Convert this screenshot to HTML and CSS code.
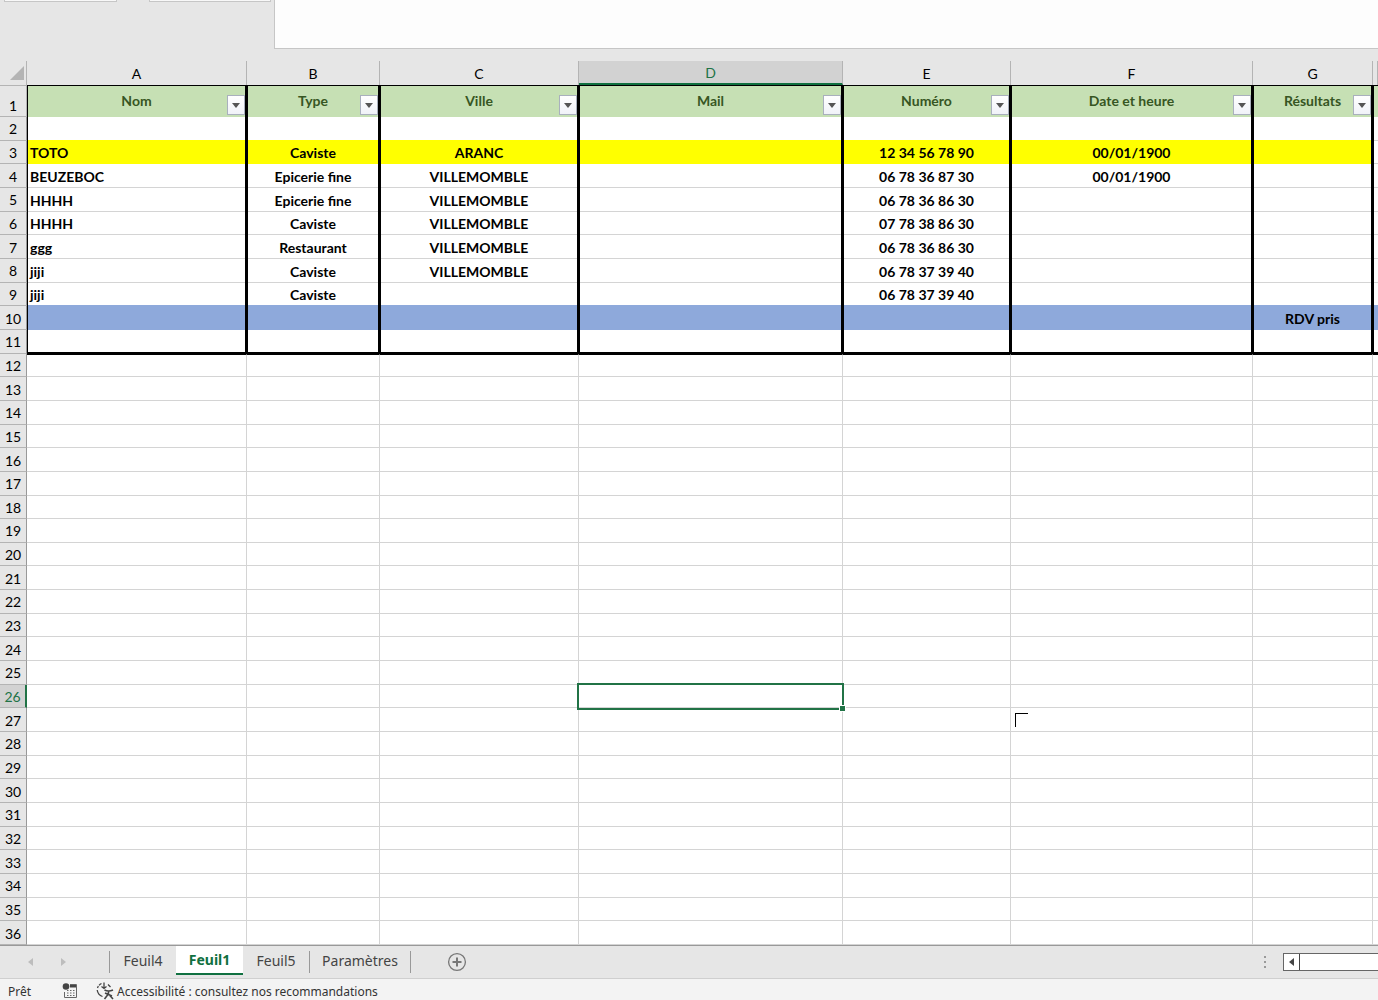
FILE: index.html
```html
<!DOCTYPE html>
<html lang="fr">
<head>
<meta charset="utf-8">
<title>Classeur</title>
<link rel="stylesheet" href="styles.css">
</head>
<body>
<div class="app">
  <header class="formula-bar">
    <input class="name-box" aria-label="Zone Nom">
    <div class="formula-tools"></div>
    <textarea class="formula-input" aria-label="Barre de formule"></textarea>
  </header>

  <main class="sheet">
    <table class="grid">
      <colgroup><col class="c-row"><col class="c-a"><col class="c-b"><col class="c-c"><col class="c-d"><col class="c-e"><col class="c-f"><col class="c-g"><col></colgroup>
      <thead>
        <tr class="letters"><th class="corner"><svg width="14" height="14" viewBox="0 0 14 14"><path d="M14 0V14H0Z" fill="#b4b4b4"/></svg></th><th>A</th><th>B</th><th>C</th><th class="current">D</th><th>E</th><th>F</th><th>G</th><th></th></tr>
        <tr class="titles"><th class="num">1</th>
          <th>Nom<button class="filter" aria-label="Filtrer Nom"></button></th>
          <th>Type<button class="filter" aria-label="Filtrer Type"></button></th>
          <th>Ville<button class="filter" aria-label="Filtrer Ville"></button></th>
          <th>Mail<button class="filter" aria-label="Filtrer Mail"></button></th>
          <th>Numéro<button class="filter" aria-label="Filtrer Numéro"></button></th>
          <th>Date et heure<button class="filter" aria-label="Filtrer Date et heure"></button></th>
          <th>Résultats<button class="filter" aria-label="Filtrer Résultats"></button></th>
          <th></th></tr>
      </thead>
      <tbody class="data">
        <tr class="before-yellow"><th>2</th><td></td><td></td><td></td><td></td><td></td><td></td><td></td><td></td></tr>
        <tr class="yellow"><th>3</th><td>TOTO</td><td>Caviste</td><td>ARANC</td><td></td><td>12 34 56 78 90</td><td>00/01/1900</td><td></td><td></td></tr>
        <tr><th>4</th><td>BEUZEBOC</td><td>Epicerie fine</td><td>VILLEMOMBLE</td><td></td><td>06 78 36 87 30</td><td>00/01/1900</td><td></td><td></td></tr>
        <tr><th>5</th><td>HHHH</td><td>Epicerie fine</td><td>VILLEMOMBLE</td><td></td><td>06 78 36 86 30</td><td></td><td></td><td></td></tr>
        <tr><th>6</th><td>HHHH</td><td>Caviste</td><td>VILLEMOMBLE</td><td></td><td>07 78 38 86 30</td><td></td><td></td><td></td></tr>
        <tr><th>7</th><td>ggg</td><td>Restaurant</td><td>VILLEMOMBLE</td><td></td><td>06 78 36 86 30</td><td></td><td></td><td></td></tr>
        <tr><th>8</th><td>jiji</td><td>Caviste</td><td>VILLEMOMBLE</td><td></td><td>06 78 37 39 40</td><td></td><td></td><td></td></tr>
        <tr class="before-blue"><th>9</th><td>jiji</td><td>Caviste</td><td></td><td></td><td>06 78 37 39 40</td><td></td><td></td><td></td></tr>
        <tr class="blue"><th>10</th><td></td><td></td><td></td><td></td><td></td><td></td><td>RDV pris</td><td></td></tr>
        <tr class="last"><th>11</th><td></td><td></td><td></td><td></td><td></td><td></td><td></td><td></td></tr>
      </tbody>
      <tbody class="empty">
        <tr><th>12</th><td></td><td></td><td></td><td></td><td></td><td></td><td></td><td></td></tr>
        <tr><th>13</th><td></td><td></td><td></td><td></td><td></td><td></td><td></td><td></td></tr>
        <tr><th>14</th><td></td><td></td><td></td><td></td><td></td><td></td><td></td><td></td></tr>
        <tr><th>15</th><td></td><td></td><td></td><td></td><td></td><td></td><td></td><td></td></tr>
        <tr><th>16</th><td></td><td></td><td></td><td></td><td></td><td></td><td></td><td></td></tr>
        <tr><th>17</th><td></td><td></td><td></td><td></td><td></td><td></td><td></td><td></td></tr>
        <tr><th>18</th><td></td><td></td><td></td><td></td><td></td><td></td><td></td><td></td></tr>
        <tr><th>19</th><td></td><td></td><td></td><td></td><td></td><td></td><td></td><td></td></tr>
        <tr><th>20</th><td></td><td></td><td></td><td></td><td></td><td></td><td></td><td></td></tr>
        <tr><th>21</th><td></td><td></td><td></td><td></td><td></td><td></td><td></td><td></td></tr>
        <tr><th>22</th><td></td><td></td><td></td><td></td><td></td><td></td><td></td><td></td></tr>
        <tr><th>23</th><td></td><td></td><td></td><td></td><td></td><td></td><td></td><td></td></tr>
        <tr><th>24</th><td></td><td></td><td></td><td></td><td></td><td></td><td></td><td></td></tr>
        <tr><th>25</th><td></td><td></td><td></td><td></td><td></td><td></td><td></td><td></td></tr>
        <tr><th class="current">26</th><td></td><td></td><td></td><td class="selected"><span class="handle"></span></td><td></td><td></td><td></td><td></td></tr>
        <tr><th>27</th><td></td><td></td><td></td><td></td><td></td><td class="pointer-cell"><span class="pointer"></span></td><td></td><td></td></tr>
        <tr><th>28</th><td></td><td></td><td></td><td></td><td></td><td></td><td></td><td></td></tr>
        <tr><th>29</th><td></td><td></td><td></td><td></td><td></td><td></td><td></td><td></td></tr>
        <tr><th>30</th><td></td><td></td><td></td><td></td><td></td><td></td><td></td><td></td></tr>
        <tr><th>31</th><td></td><td></td><td></td><td></td><td></td><td></td><td></td><td></td></tr>
        <tr><th>32</th><td></td><td></td><td></td><td></td><td></td><td></td><td></td><td></td></tr>
        <tr><th>33</th><td></td><td></td><td></td><td></td><td></td><td></td><td></td><td></td></tr>
        <tr><th>34</th><td></td><td></td><td></td><td></td><td></td><td></td><td></td><td></td></tr>
        <tr><th>35</th><td></td><td></td><td></td><td></td><td></td><td></td><td></td><td></td></tr>
        <tr><th>36</th><td></td><td></td><td></td><td></td><td></td><td></td><td></td><td></td></tr>
      </tbody>
    </table>
  </main>

  <nav class="tab-bar" aria-label="Feuilles">
    <div class="arrows">
      <button aria-label="Feuille précédente"><svg width="6" height="8" viewBox="0 0 6 8"><path d="M5 0V8L0 4Z" fill="#bdbdbd"/></svg></button>
      <button aria-label="Feuille suivante"><svg width="6" height="8" viewBox="0 0 6 8"><path d="M1 0V8L6 4Z" fill="#bdbdbd"/></svg></button>
    </div>
    <button class="tab first">Feuil4</button>
    <button class="tab active">Feuil1</button>
    <button class="tab">Feuil5</button>
    <button class="tab wide">Paramètres</button>
    <button class="add" aria-label="Nouvelle feuille"><svg width="20" height="20" viewBox="0 0 20 20" fill="none" stroke="#777"><circle cx="10" cy="10" r="8.4" stroke-width="1.3"/><path d="M10 5.5V14.500M5.500 10H14.500" stroke-width="2"/></svg></button>
    <div class="scroll-area">
      <svg width="4" height="14" viewBox="0 0 4 14" fill="#999"><path d="M1 1h2v2H1zM1 6h2v2H1zM1 11h2v2H1z"/></svg>
      <div class="scroller">
        <button class="scroll-left" aria-label="Défiler à gauche"><svg width="6" height="8" viewBox="0 0 6 8"><path d="M5 0V8L0 4Z" fill="#444"/></svg></button>
        <div class="thumb"></div>
      </div>
    </div>
  </nav>

  <footer class="status">
    <span class="ready">Prêt</span>
    <svg class="macro" width="16" height="16" viewBox="0 0 16 16"><path d="M8 1.500H14.500V14.500H2.500V9" fill="none" stroke="#666"/><path d="M8 2H14V4.500H8z" fill="#444"/><circle cx="4" cy="3.500" r="3.300" fill="#444"/><path d="M5 7.500h1.500M8 7.500h1.500M11 7.500h1.500M5 10h1.500M8 10h1.500M11 10h1.500M5 12.500h1.500M8 12.500h1.500M11 12.500h1.500" stroke="#666"/></svg>
    <svg class="access" width="18" height="18" viewBox="0 0 18 18" fill="none" stroke="#444" stroke-width="1.300"><path d="M5.500 1.500A7.500 7.500 0 0 0 1.500 6" stroke-dasharray="3 1"/><path d="M1.200 8A8 8 0 0 0 6.500 14.500"/><path d="M8 0.500V6M5.500 4.500L8 6.500L10.500 4.500M12 2.500L14.500 5"/><path d="M8.500 8Q12.500 10 17 8M12.700 9.500L12 12.500L8.500 17M12.500 12L17 17M9 11L16 14" stroke-width="1.600"/></svg>
    <span>Accessibilité : consultez nos recommandations</span>
  </footer>
</div>
</body>
</html>
```
FILE: styles.css
```css
* { box-sizing: border-box; }

body {
  margin: 0;
  background: #e6e6e6;
  color: #000;
  font-family: Lato, "Liberation Sans", sans-serif;
  font-size: 14px;
}

button {
  margin: 0;
  padding: 0;
  border: 0;
  background: none;
  color: inherit;
  font: inherit;
}

svg { display: block; }

.app {
  display: flex;
  flex-direction: column;
  height: 100vh;
  overflow: hidden;
}

/* formula bar */
.formula-bar {
  display: flex;
  align-items: flex-start;
  flex: none;
  height: 61px;
  padding-left: 4px;
}

.name-box,
.formula-tools {
  height: 2px;
  padding: 0;
  border: 1px solid #c6c6c6;
  border-top: 0;
  background: #f8f8f8;
}

.name-box { width: 113px; }
.formula-tools { width: 122px; margin: 0 3px 0 32px; }

.formula-input {
  flex: 1;
  height: 49px;
  border: 1px solid #c6c6c6;
  border-width: 0 0 1px 1px;
  background: #fdfdfd;
  resize: none;
}

/* cell grid */
.sheet { flex: 1; min-height: 0; }

.grid {
  width: 100%;
  height: 100%;
  table-layout: fixed;
  border-collapse: separate;
  border-spacing: 0;
}

.c-row { width: 27px; }
.c-a { width: 220px; }
.c-b { width: 133px; }
.c-c { width: 199px; }
.c-d { width: 264px; }
.c-e { width: 168px; }
.c-f { width: 242px; }
.c-g { width: 120px; }

th, td {
  padding: 0;
  line-height: 20px;
  text-align: center;
  overflow: hidden;
  white-space: nowrap;
}

.letters { height: 24px; }

.letters th {
  padding-top: 2px;
  border-right: 1px solid #b4b4b4;
  font-weight: 400;
  vertical-align: middle;
}

.letters .corner { padding: 0 0 0 10px; }

.letters .current {
  border-bottom: 2px solid #107040;
  background: #d2d2d2;
  color: #217346;
}

.titles { height: 32px; }

.titles th {
  position: relative;
  border-left: 1px solid #000;
  border-right: 2px solid #000;
  background: #c6e0b4;
  box-shadow: inset 0 1px #000;
  color: #375623;
  padding-top: 6px;
  font-weight: 700;
  vertical-align: top;
}

.titles th.num {
  border: 1px solid #b4b4b4;
  border-width: 1px 1px 1px 0;
  background: #e6e6e6;
  box-shadow: none;
  color: #000;
  font-weight: 400;
  vertical-align: bottom;
}

.titles th:last-child { border-right: 0; }

.filter {
  position: absolute;
  right: 0;
  bottom: 2px;
  width: 18px;
  height: 20px;
  border: 1px solid #a9b0bd;
  background: linear-gradient(#fff, #f0f2f8);
}

.filter::before {
  content: "";
  display: block;
  margin: 0 auto;
  width: 0;
  border: 4px solid transparent;
  border-top: 5px solid #555;
  border-bottom: 0;
}

tbody th {
  padding-top: 2px;
  border-right: 1px solid #999;
  border-bottom: 1px solid #b4b4b4;
  font-weight: 400;
}

tbody th.current {
  border-right: 2px solid #217346;
  background: #d2d2d2;
  color: #217346;
}

tbody td {
  padding-top: 2px;
  border-right: 1px solid #d4d4d4;
  background: #fff;
  box-shadow: inset 0 -1px #d4d4d4;
}

.data td {
  border-left: 1px solid #000;
  border-right: 2px solid #000;
  font-weight: 700;
}

.data td:nth-child(2) {
  padding-left: 2px;
  text-align: left;
}

tbody td:last-child { border-right: 0; }

.data .before-yellow td:not(:last-child) { box-shadow: inset 0 -1px #ff0; }
.data .yellow td:not(:last-child) { background: #ff0; box-shadow: none; }
.data .before-blue td { box-shadow: inset 0 -1px #8ea9db; }
.data .blue td { background: #8ea9db; box-shadow: none; }
.data .last td { box-shadow: inset 0 -2px #000; }
.empty tr:first-child td { border-top: 1px solid #000; }

td.selected,
td.pointer-cell {
  position: relative;
  overflow: visible;
}

td.selected::before {
  content: "";
  position: absolute;
  inset: -2px;
  border: 2px solid #217346;
}

.handle {
  position: absolute;
  right: -4px;
  bottom: -4px;
  width: 7px;
  height: 7px;
  border: 1px solid #fff;
  background: #217346;
}

.pointer {
  position: absolute;
  left: 4px;
  top: 5px;
  width: 13px;
  height: 14px;
  border: solid #000;
  border-width: 1px 0 0 1px;
}

/* sheet tabs */
.tab-bar {
  display: flex;
  align-items: center;
  flex: none;
  height: 33px;
  border-top: 1px solid #999;
  color: #444;
  font-family: "Noto Sans", sans-serif;
  font-size: 14px;
}

.arrows {
  display: flex;
  gap: 26px;
  width: 109px;
  padding-left: 28px;
}

.tab {
  position: relative;
  height: 22px;
  min-width: 67px;
  padding-bottom: 3px;
  border-right: 1px solid #999;
}

.tab.first { border-left: 1px solid #999; border-right: 0; }
.tab.wide { min-width: 101px; }

.tab.active {
  align-self: flex-start;
  height: 29px;
  padding-bottom: 0;
  border: 0;
  border-bottom: 2px solid #107040;
  background: #fff;
  color: #107040;
  font-weight: 700;
}

.add { margin-left: 36px; }

.scroll-area {
  display: flex;
  align-items: center;
  gap: 16px;
  width: 115px;
  margin-left: auto;
}

.scroller {
  display: flex;
  flex: 1;
  height: 18px;
  border: 1px solid #666;
  border-right: 0;
  background: #fff;
}

.scroll-left {
  display: flex;
  align-items: center;
  justify-content: center;
  width: 16px;
  border-right: 1px solid #444;
}

.thumb { flex: 1; }

/* status bar */
.status {
  display: flex;
  align-items: center;
  flex: none;
  height: 22px;
  padding: 3px 8px 0;
  border-top: 1px solid #cfcfcf;
  background: #f3f3f3;
  color: #333;
  font-family: "Noto Sans", sans-serif;
  font-size: 12px;
}

.ready { width: 54px; }
.access { margin: 0 3px 0 18px; }
```
